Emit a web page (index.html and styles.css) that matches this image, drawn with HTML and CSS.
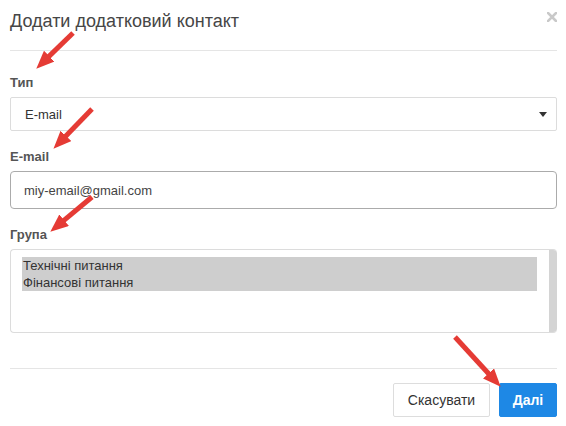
FILE: index.html
```html
<!DOCTYPE html>
<html lang="uk">
<head>
<meta charset="utf-8">
<title>Додати додатковий контакт</title>
<link rel="stylesheet" href="styles.css">
</head>
<body>
<div class="modal">
  <div class="modal-header">
    <h4 class="modal-title">Додати додатковий контакт</h4>
    <svg class="close" width="10" height="10" viewBox="0 0 10 10" aria-label="Закрити">
      <path d="M1 1 L9 9 M9 1 L1 9" stroke="#c9c9c9" stroke-width="2.6" stroke-linecap="square"/>
    </svg>
  </div>
  <div class="modal-body">
    <div class="form-group">
      <label class="label">Тип</label>
      <div class="select">
        <span>E-mail</span>
        <span class="caret"></span>
      </div>
    </div>
    <div class="form-group">
      <label class="label">E-mail</label>
      <div class="input">miy-email@gmail.com</div>
    </div>
    <div class="form-group">
      <label class="label">Група</label>
      <div class="listbox">
        <div class="options">
          <div class="option selected">Технічні питання</div>
          <div class="option selected">Фінансові питання</div>
        </div>
        <div class="scrollbar"></div>
      </div>
    </div>
  </div>
  <div class="modal-footer">
    <button class="btn btn-default">Скасувати</button>
    <button class="btn btn-primary">Далі</button>
  </div>

  <svg class="arrows" width="566" height="426" viewBox="0 0 566 426">
    <defs>
      <marker id="ah" markerWidth="18" markerHeight="15" refX="5" refY="7.5" orient="auto" markerUnits="userSpaceOnUse">
        <path d="M0,0 L18,7.5 L0,15 Z" fill="#e53b35"/>
      </marker>
    </defs>
    <g stroke="#e53b35" stroke-width="5" marker-end="url(#ah)">
      <line x1="73" y1="33" x2="45.6" y2="59.6"/>
      <line x1="92" y1="109" x2="62.5" y2="139.5"/>
      <line x1="92" y1="197" x2="60.3" y2="223.4"/>
      <line x1="455" y1="337" x2="491.9" y2="377.2"/>
    </g>
  </svg>
</div>
</body>
</html>
```

FILE: styles.css
```css
* { box-sizing: border-box; }

body {
  margin: 0;
  background: #fff;
  font-family: "Liberation Sans", Arial, sans-serif;
  color: #333;
}

.modal {
  position: relative;
  padding: 0 9px 0 10px;
  height: 426px;
}

.modal-header {
  height: 51px;
  border-bottom: 1px solid #e5e5e5;
  display: flex;
  justify-content: space-between;
  align-items: flex-start;
}

.modal-title {
  margin: 0;
  padding-top: 10px;
  font-size: 18px;
  line-height: 22px;
  font-weight: normal;
  color: #464646;
}

.close {
  margin-top: 12px;
  display: block;
}

.modal-body {
  padding: 23px 0 35px;
}

.form-group + .form-group {
  margin-top: 17px;
}

.label {
  display: block;
  font-size: 13px;
  line-height: 18px;
  font-weight: bold;
  color: #555;
  margin-bottom: 5px;
}

.select {
  height: 34px;
  border: 1px solid #dcdcdc;
  border-radius: 2px;
  display: flex;
  align-items: center;
  justify-content: space-between;
  padding: 0 9px 0 14px;
  font-size: 13px;
  color: #333;
}

.caret {
  width: 0;
  height: 0;
  border-top: 5px solid #333;
  border-left: 4.5px solid transparent;
  border-right: 4.5px solid transparent;
}

.input {
  height: 38px;
  border: 1px solid #ababab;
  border-radius: 4px;
  display: flex;
  align-items: center;
  padding: 0 13px;
  font-size: 13px;
  color: #444;
}

.listbox {
  height: 84px;
  border: 1px solid #dcdcdc;
  border-right: 0;
  border-radius: 4px;
  display: flex;
  overflow: hidden;
}

.options {
  flex: 1;
  padding: 7px 12px 0 11px;
}

.option {
  height: 17px;
  line-height: 17px;
  font-size: 13px;
  padding-left: 1px;
  color: #333;
}

.option.selected {
  background: #cecece;
}

.scrollbar {
  width: 8px;
  margin-top: -1px;
  margin-bottom: -1px;
  background: #d4d4d4;
  border-radius: 0 4px 4px 0;
}

.modal-footer {
  border-top: 1px solid #e5e5e5;
  padding-top: 14px;
  display: flex;
  justify-content: flex-end;
  gap: 9px;
}

.btn {
  height: 34px;
  font-family: "Liberation Sans", Arial, sans-serif;
  font-size: 14px;
  border-radius: 2px;
  border: 1px solid #ddd;
  cursor: pointer;
}

.btn-default {
  width: 97px;
  padding: 0;
  background: #fff;
  color: #333;
}

.btn-primary {
  width: 58px;
  padding: 0;
  background: #1e88e5;
  border-color: #1e88e5;
  color: #fff;
  font-weight: bold;
}

.arrows {
  position: absolute;
  top: 0;
  left: 0;
  pointer-events: none;
}
```
